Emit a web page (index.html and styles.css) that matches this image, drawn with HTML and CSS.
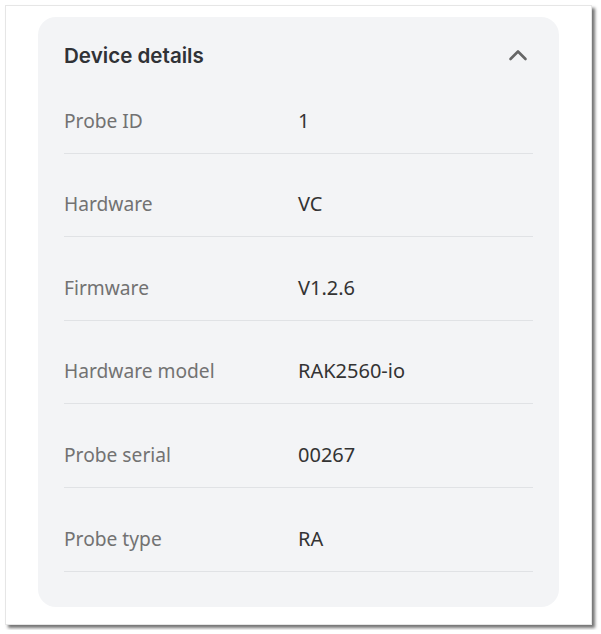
FILE: index.html
```html
<!DOCTYPE html>
<html lang="en">
<head>
    <meta charset="UTF-8">
    <meta name="viewport" content="width=device-width, initial-scale=1.0">
    <title>Device details</title>
    <link rel="stylesheet" href="styles.css">
</head>
<body>
    <div class="frame">
        <!-- Device details card -->
        <div class="card">
            <div class="card-header">
                <h2>Device details</h2>
                <svg class="chevron" width="20" height="12" viewBox="0 0 20 12">
                    <path d="M2.5 10 L10 2.5 L17.5 10" fill="none" stroke="#666" stroke-width="2.6" stroke-linecap="round" stroke-linejoin="round"/>
                </svg>
            </div>
            <div class="row"><span class="label">Probe ID</span><span class="value">1</span></div>
            <div class="row"><span class="label">Hardware</span><span class="value">VC</span></div>
            <div class="row"><span class="label">Firmware</span><span class="value">V1.2.6</span></div>
            <div class="row"><span class="label">Hardware model</span><span class="value">RAK2560-io</span></div>
            <div class="row"><span class="label">Probe serial</span><span class="value">00267</span></div>
            <div class="row"><span class="label">Probe type</span><span class="value">RA</span></div>
        </div>
    </div>
</body>
</html>
```

FILE: styles.css
```css
body {
    margin: 0;
    padding: 0;
    background-color: #ffffff;
    font-family: "Noto Sans", "Open Sans", sans-serif;
}

/* Window frame */
.frame {
    margin: 5px;
    width: 587px;
    height: 620px;
    box-sizing: border-box;
    border: 1px solid #e6e6e6;
    background: #ffffff;
    box-shadow: 3px 3px 3px rgba(0, 0, 0, 0.55);
    padding: 11px 32px 0 32px;
}

.card {
    background-color: #f3f4f6;
    border-radius: 18px;
    padding: 0 26px 35px 26px;
}

.card-header {
    display: flex;
    justify-content: space-between;
    align-items: center;
    padding-top: 26px;
    padding-bottom: 1px;
}

.card-header h2 {
    margin: 0;
    font-family: Inter, "Noto Sans", sans-serif;
    font-size: 20.6px;
    font-weight: 600;
    line-height: 26px;
    color: #303236;
}

.chevron {
    margin-right: 5px;
    margin-top: -3px;
}

.row {
    display: flex;
    padding: 37.6px 0 19px 0;
    line-height: 26px;
    font-size: 19.2px;
    border-bottom: 1px solid #e0e2e5;
}

.label {
    width: 234px;
    color: #727272;
}

.value {
    font-size: 20px;
    color: #333333;
}
```
